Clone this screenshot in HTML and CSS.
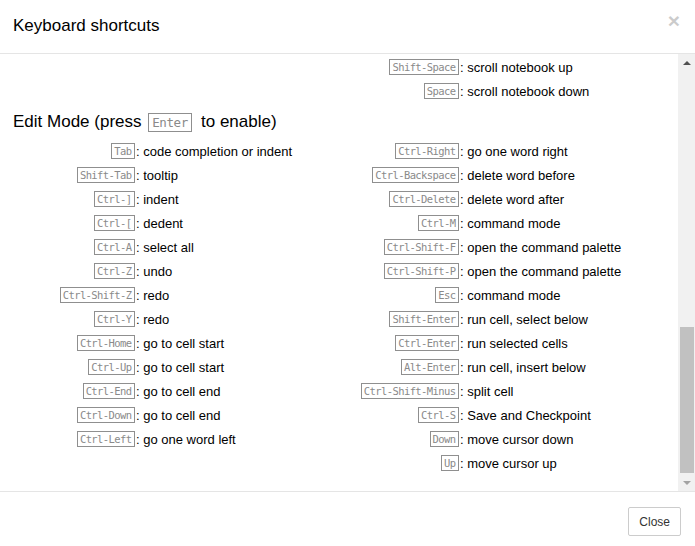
FILE: index.html
```html
<!DOCTYPE html>
<html lang="en">
<head>
<meta charset="utf-8">
<title>Keyboard shortcuts</title>
<link rel="stylesheet" href="styles.css">
</head>
<body>
<div class="modal">
  <header class="modal-header">
    <h3 class="modal-title">Keyboard shortcuts</h3>
    <button class="close" type="button">×</button>
  </header>
  <div class="modal-main">
    <div class="modal-body">
      <section class="cols">
        <div class="col"></div>
        <div class="col">
          <div class="row"><span class="key"><kbd>Shift-Space</kbd></span><span class="desc">: scroll notebook up</span></div>
          <div class="row"><span class="key"><kbd>Space</kbd></span><span class="desc">: scroll notebook down</span></div>
        </div>
      </section>
      <h4 class="section-title">Edit Mode (press <kbd class="big">Enter</kbd> to enable)</h4>
      <section class="cols">
        <div class="col">
          <div class="row"><span class="key"><kbd>Tab</kbd></span><span class="desc">: code completion or indent</span></div>
          <div class="row"><span class="key"><kbd>Shift-Tab</kbd></span><span class="desc">: tooltip</span></div>
          <div class="row"><span class="key"><kbd>Ctrl-]</kbd></span><span class="desc">: indent</span></div>
          <div class="row"><span class="key"><kbd>Ctrl-[</kbd></span><span class="desc">: dedent</span></div>
          <div class="row"><span class="key"><kbd>Ctrl-A</kbd></span><span class="desc">: select all</span></div>
          <div class="row"><span class="key"><kbd>Ctrl-Z</kbd></span><span class="desc">: undo</span></div>
          <div class="row"><span class="key"><kbd>Ctrl-Shift-Z</kbd></span><span class="desc">: redo</span></div>
          <div class="row"><span class="key"><kbd>Ctrl-Y</kbd></span><span class="desc">: redo</span></div>
          <div class="row"><span class="key"><kbd>Ctrl-Home</kbd></span><span class="desc">: go to cell start</span></div>
          <div class="row"><span class="key"><kbd>Ctrl-Up</kbd></span><span class="desc">: go to cell start</span></div>
          <div class="row"><span class="key"><kbd>Ctrl-End</kbd></span><span class="desc">: go to cell end</span></div>
          <div class="row"><span class="key"><kbd>Ctrl-Down</kbd></span><span class="desc">: go to cell end</span></div>
          <div class="row"><span class="key"><kbd>Ctrl-Left</kbd></span><span class="desc">: go one word left</span></div>
        </div>
        <div class="col">
          <div class="row"><span class="key"><kbd>Ctrl-Right</kbd></span><span class="desc">: go one word right</span></div>
          <div class="row"><span class="key"><kbd>Ctrl-Backspace</kbd></span><span class="desc">: delete word before</span></div>
          <div class="row"><span class="key"><kbd>Ctrl-Delete</kbd></span><span class="desc">: delete word after</span></div>
          <div class="row"><span class="key"><kbd>Ctrl-M</kbd></span><span class="desc">: command mode</span></div>
          <div class="row"><span class="key"><kbd>Ctrl-Shift-F</kbd></span><span class="desc">: open the command palette</span></div>
          <div class="row"><span class="key"><kbd>Ctrl-Shift-P</kbd></span><span class="desc">: open the command palette</span></div>
          <div class="row"><span class="key"><kbd>Esc</kbd></span><span class="desc">: command mode</span></div>
          <div class="row"><span class="key"><kbd>Shift-Enter</kbd></span><span class="desc">: run cell, select below</span></div>
          <div class="row"><span class="key"><kbd>Ctrl-Enter</kbd></span><span class="desc">: run selected cells</span></div>
          <div class="row"><span class="key"><kbd>Alt-Enter</kbd></span><span class="desc">: run cell, insert below</span></div>
          <div class="row"><span class="key"><kbd>Ctrl-Shift-Minus</kbd></span><span class="desc">: split cell</span></div>
          <div class="row"><span class="key"><kbd>Ctrl-S</kbd></span><span class="desc">: Save and Checkpoint</span></div>
          <div class="row"><span class="key"><kbd>Down</kbd></span><span class="desc">: move cursor down</span></div>
          <div class="row"><span class="key"><kbd>Up</kbd></span><span class="desc">: move cursor up</span></div>
        </div>
      </section>
    </div>
    <div class="scrollbar" aria-hidden="true">
      <div class="sb-btn"><span class="tri up"></span></div>
      <div class="sb-track"><div class="sb-thumb"></div></div>
      <div class="sb-btn"><span class="tri down"></span></div>
    </div>
  </div>
  <footer class="modal-footer">
    <button class="btn" type="button">Close</button>
  </footer>
</div>
</body>
</html>
```

FILE: styles.css
```css
* { box-sizing: border-box; }
html, body { margin: 0; padding: 0; background: #fff; }
body {
  font-family: "Liberation Sans", Arial, sans-serif;
  font-size: 13px;
  color: #000;
}
.modal {
  width: 695px;
  height: 546px;
  display: flex;
  flex-direction: column;
  overflow: hidden;
}
.modal-header {
  height: 54px;
  flex: none;
  border-bottom: 1px solid #e5e5e5;
  display: flex;
  justify-content: space-between;
  align-items: flex-start;
  padding: 16px 15px 0 13px;
}
.modal-title {
  margin: 0;
  font-size: 17px;
  font-weight: normal;
  line-height: 20px;
  color: #000;
}
.close {
  border: 0;
  background: none;
  padding: 0;
  margin-top: -6px;
  font-family: "Liberation Sans", Arial, sans-serif;
  font-size: 21px;
  font-weight: bold;
  line-height: 21px;
  color: #000;
  opacity: 0.2;
}
.modal-main {
  height: 437px;
  flex: none;
  display: flex;
  overflow: hidden;
}
.modal-body {
  flex: 1;
  padding: 1px 0 0 13px;
  overflow: hidden;
}
.cols {
  display: grid;
  grid-template-columns: 324px 324px;
}
.row {
  height: 24px;
  display: flex;
  align-items: center;
  white-space: nowrap;
}
.key {
  width: 122px;
  flex: none;
  display: flex;
  justify-content: flex-end;
}
kbd {
  font-family: "DejaVu Sans Mono", "Liberation Mono", monospace;
  font-size: 10.5px;
  font-weight: 300;
  letter-spacing: -0.6px;
  line-height: 14px;
  padding: 0 2.6px 0 2px;
  border: 1px solid #8f8f8f;
  color: #8a8a8a;
  display: inline-block;
}
.desc { padding-left: 1px; }
.section-title {
  margin: 0;
  height: 36px;
  padding-top: 2px;
  display: flex;
  align-items: center;
  font-size: 17px;
  font-weight: normal;
  white-space: pre;
}
kbd.big {
  font-size: 12.5px;
  letter-spacing: -0.4px;
  line-height: 17px;
  padding: 0 3.4px 0 3px;
  margin: 0 4px 0 2px;
}
.scrollbar {
  width: 17px;
  flex: none;
  background: #f1f1f1;
  display: flex;
  flex-direction: column;
}
.sb-btn {
  height: 17px;
  flex: none;
  display: flex;
  align-items: center;
  justify-content: center;
}
.tri {
  width: 0;
  height: 0;
  border-left: 4px solid transparent;
  border-right: 4px solid transparent;
}
.tri.up { border-bottom: 4px solid #505050; }
.tri.down { border-top: 4px solid #a3a3a3; }
.sb-track {
  flex: 1;
  display: flex;
  flex-direction: column;
  justify-content: flex-end;
  padding: 0 1px 1px 2px;
}
.sb-thumb {
  height: 146px;
  background: #c1c1c1;
}
.modal-footer {
  flex: 1;
  border-top: 1px solid #e5e5e5;
  display: flex;
  justify-content: flex-end;
  align-items: flex-start;
  padding: 15px 14px 0 0;
}
.btn {
  height: 29px;
  padding: 0 10px;
  border: 1px solid #ccc;
  border-radius: 2px;
  background: #fff;
  font-family: "Liberation Sans", Arial, sans-serif;
  font-size: 12px;
  color: #333;
}
```
